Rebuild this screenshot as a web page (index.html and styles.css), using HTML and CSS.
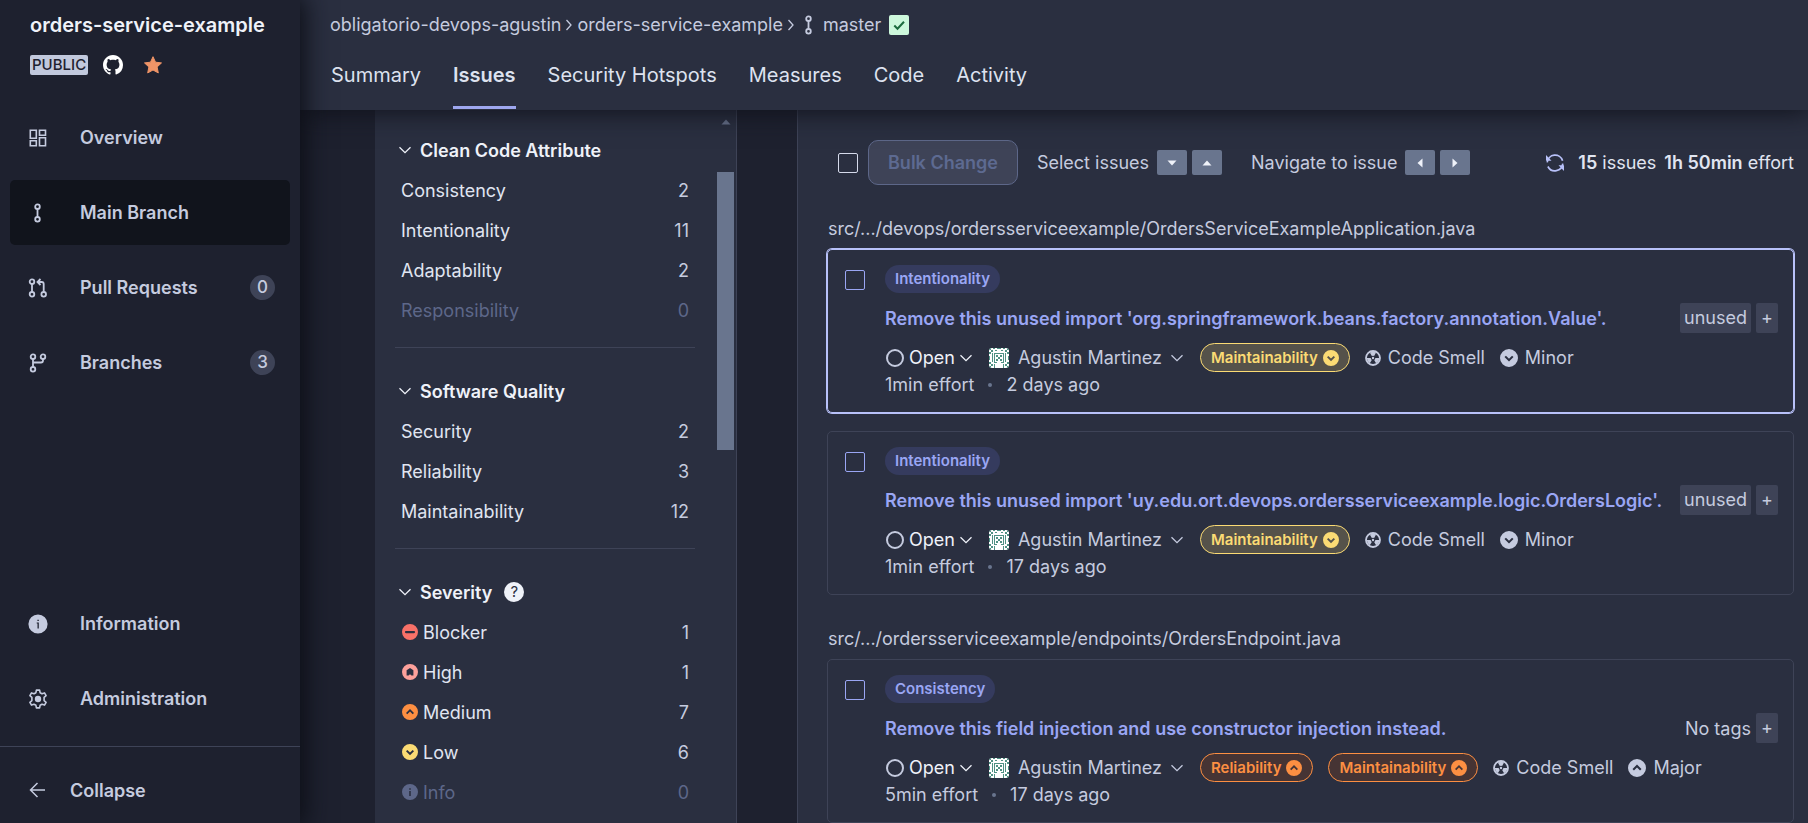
FILE: index.html
```html
<!DOCTYPE html>
<html lang="en">
<head>
<meta charset="utf-8">
<title>Issues - orders-service-example</title>
<meta name="viewport" content="width=device-width, initial-scale=1">
<link rel="stylesheet" href="styles.css">
</head>
<body>
<svg class="sprite" aria-hidden="true">
  <symbol id="i-chevron" viewBox="0 0 12 8"><path d="M.5 1.2 6 6.6l5.500-5.400" fill="none" stroke="currentColor" stroke-width="1.300"/></symbol>
  <symbol id="i-right" viewBox="0 0 8 14"><path d="M1.500 2l4.500 5-4.500 5" fill="none" stroke="currentColor" stroke-width="1.300"/></symbol>
  <symbol id="i-branch-main" viewBox="0 0 20 20"><g fill="none" stroke="currentColor" stroke-width="1.800"><circle cx="9.500" cy="3.700" r="2.300"/><circle cx="9.500" cy="16.300" r="2.300"/><path d="M9.500 6v8"/></g></symbol>
  <symbol id="i-down-circle" viewBox="0 0 16 16"><path fill="currentColor" fill-rule="evenodd" d="M8 0a8 8 0 1 1 0 16A8 8 0 0 1 8 0zM5.300 5.900 4 7.200l4 4 4-4-1.300-1.300L8 8.600z"/></symbol>
  <symbol id="i-up-circle" viewBox="0 0 16 16"><path fill="currentColor" fill-rule="evenodd" d="M8 0a8 8 0 1 1 0 16A8 8 0 0 1 8 0zM8 4.900l-4 4 1.300 1.300L8 7.500l2.700 2.700L12 8.900z"/></symbol>
  <symbol id="i-smell" viewBox="0 0 16 16"><circle cx="8" cy="8" r="7" fill="none" stroke="currentColor" stroke-width="1.800"/><g fill="currentColor"><circle cx="8" cy="8" r="1.200"/><path d="M6.800 6 4.800 2.600A6.200 6.200 0 0 0 1.800 8h3.900A2.300 2.300 0 0 1 6.800 6z" transform="rotate(60 8 8)"/><path d="M9.200 6l2-3.400a6.200 6.200 0 0 1 3 5.400h-3.900A2.300 2.300 0 0 0 9.200 6z" transform="rotate(60 8 8)"/><path d="M6.900 10 5 13.400a6.200 6.200 0 0 0 6 0L9.100 10a2.300 2.300 0 0 1-2.200 0z" transform="rotate(60 8 8)"/></g></symbol>
  <symbol id="i-avatar" viewBox="0 0 20 20"><rect width="20" height="20" fill="#fff"/><path fill="#4f9184" d="M0 0h2v2H0zM4 0h2v1H4zM8 0h4v1H8zM14 0h2v1h-2zM18 0h2v2h-2zM2 2h2v2H2zM6 2h2v1H6zM12 2h2v1h-2zM16 2h2v2h-2zM0 4h2v2H0zM18 4h2v2h-2zM0 8h1v4H0zM19 8h1v4h-1zM5 5h10v1H5zM5 6h1v8H5zM14 6h1v8h-1zM7 7h2v2H7zM11 7h2v2h-2zM9 9h2v2H9zM7 11h2v2H7zM11 11h2v2h-2zM3 5h1v9H3zM16 5h1v9h-1zM5 14h3v1H5zM12 14h3v1h-3zM0 14h2v2H0zM18 14h2v2h-2zM2 16h2v2H2zM16 16h2v2h-2zM5 16h1v4H5zM14 16h1v4h-1zM0 18h2v2H0zM18 18h2v2h-2z"/></symbol>
  <symbol id="i-tri" viewBox="0 0 10 6"><path fill="currentColor" d="M.5.5h9L5 5.500z"/></symbol>
</svg>

<div class="app">
  <aside class="sidebar">
    <div class="project">
      <h1 class="project-name">orders-service-example</h1>
      <div class="project-meta">
        <span class="visibility">PUBLIC</span>
        <svg class="github" width="20" height="20" viewBox="0 0 16 16" role="img" aria-label="GitHub"><path fill="currentColor" d="M8 0C3.580 0 0 3.580 0 8c0 3.540 2.290 6.530 5.470 7.590.4.070.55-.17.55-.38 0-.19-.01-.82-.01-1.490-2.010.37-2.530-.49-2.690-.94-.09-.23-.48-.94-.82-1.130-.28-.15-.68-.52-.01-.53.63-.01 1.080.58 1.230.82.72 1.210 1.870.87 2.330.66.070-.52.28-.87.51-1.070-1.780-.2-3.640-.89-3.640-3.950 0-.87.31-1.590.82-2.150-.08-.2-.36-1.020.08-2.120 0 0 .67-.21 2.200.82.64-.18 1.320-.27 2-.27.68 0 1.360.09 2 .27 1.530-1.040 2.200-.82 2.200-.82.44 1.100.16 1.920.08 2.120.51.56.82 1.270.82 2.150 0 3.070-1.870 3.750-3.650 3.950.29.25.54.73.54 1.480 0 1.070-.01 1.930-.01 2.200 0 .21.15.46.55.38A8.013 8.013 0 0 0 16 8c0-4.420-3.580-8-8-8z"/></svg>
        <button class="star" type="button" aria-label="Favorite"><svg width="20" height="20" viewBox="0 0 20 20"><path fill="currentColor" stroke="currentColor" stroke-linejoin="round" d="M10 1.700l2.500 5.500 6 .7-4.400 4.100 1.200 5.900L10 15l-5.300 2.900 1.200-5.900L1.500 7.900l6-.7z"/></svg></button>
      </div>
    </div>
    <nav class="nav" aria-label="Project">
      <a class="nav-item" href="#"><svg width="20" height="20" viewBox="0 0 20 20" fill="none" stroke="currentColor" stroke-width="1.600"><path d="M2.300 2.300h6v8h-6zM11.500 2.300h6v5h-6zM2.300 12.700h6v5h-6zM11.500 9.700h6v8h-6z"/></svg><span>Overview</span></a>
      <a class="nav-item active" href="#" aria-current="page"><svg width="20" height="20"><use href="#i-branch-main"/></svg><span>Main Branch</span></a>
      <a class="nav-item" href="#"><svg width="20" height="20" viewBox="0 0 20 20" fill="none" stroke="currentColor" stroke-width="1.800"><circle cx="4" cy="3.700" r="2.300"/><circle cx="4" cy="16.300" r="2.300"/><circle cx="15.700" cy="16.300" r="2.300"/><path d="M4 6v8M10 4h3.700a2 2 0 0 1 2 2v8M12.500 1 9.500 4l3 3"/></svg><span>Pull Requests</span><span class="count">0</span></a>
      <a class="nav-item" href="#"><svg width="20" height="20" viewBox="0 0 20 20" fill="none" stroke="currentColor" stroke-width="1.800"><circle cx="5" cy="3.700" r="2.300"/><circle cx="5" cy="16.300" r="2.300"/><circle cx="15" cy="3.700" r="2.300"/><path d="M5 6v8M15 6v1.500a2 2 0 0 1-2 2H5"/></svg><span>Branches</span><span class="count">3</span></a>
    </nav>
    <nav class="nav nav-bottom" aria-label="Project settings">
      <a class="nav-item" href="#"><svg width="20" height="20" viewBox="0 0 20 20"><path fill="currentColor" fill-rule="evenodd" d="M10 .4a9.600 9.600 0 1 1 0 19.200A9.600 9.600 0 0 1 10 .4zM9.400 5.700v1.400h1.400V5.700zM8.700 8.600v1h.8v4.800h1.300V8.600z"/></svg><span>Information</span></a>
      <a class="nav-item" href="#"><svg width="20" height="20" viewBox="0 0 20 20"><path fill="none" stroke="currentColor" stroke-width="1.600" stroke-linejoin="round" d="M8.400 1.100h3.200l.5 2.600 1.900 1.100 2.500-.9 1.600 2.800-2 1.700v3.200l2 1.700-1.600 2.800-2.500-.9-1.900 1.100-.5 2.600H8.400l-.5-2.600L6 15.200l-2.500.9-1.600-2.800 2-1.700V8.400l-2-1.700 1.600-2.800 2.500.9 1.900-1.100z"/><circle cx="10" cy="10" r="3.200" fill="currentColor"/></svg><span>Administration</span></a>
    </nav>
    <button class="collapse" type="button"><svg width="20" height="20" viewBox="0 0 20 20" fill="none" stroke="currentColor" stroke-width="1.500"><path d="M17 10H2.500M9.500 3l-7 7 7 7"/></svg><span>Collapse</span></button>
  </aside>

  <div class="page">
    <header class="header">
      <nav class="crumbs" aria-label="Breadcrumb">
        <a href="#">obligatorio-devops-agustin</a>
        <svg width="8" height="14"><use href="#i-right"/></svg>
        <a href="#">orders-service-example</a>
        <svg width="8" height="14"><use href="#i-right"/></svg>
        <a class="crumb-branch" href="#"><svg width="20" height="20"><use href="#i-branch-main"/></svg>master</a>
        <span class="gate" role="img" aria-label="Passed"><svg width="20" height="20" viewBox="0 0 20 20"><path d="M5.300 10.500l3.200 3.200L15 6.800" fill="none" stroke="currentColor" stroke-width="2"/></svg></span>
      </nav>
      <nav class="tabs" aria-label="Sections">
        <a class="tab" href="#">Summary</a>
        <a class="tab selected" href="#" aria-current="page">Issues</a>
        <a class="tab" href="#">Security Hotspots</a>
        <a class="tab" href="#">Measures</a>
        <a class="tab" href="#">Code</a>
        <a class="tab" href="#">Activity</a>
      </nav>
    </header>

    <div class="content">
      <section class="filters" aria-label="Filters">
        <div class="facets">
          <div class="facet">
            <button class="facet-title" type="button"><svg width="12" height="8"><use href="#i-chevron"/></svg>Clean Code Attribute</button>
            <button class="facet-row" type="button"><span>Consistency</span><span class="num">2</span></button>
            <button class="facet-row" type="button"><span>Intentionality</span><span class="num">11</span></button>
            <button class="facet-row" type="button"><span>Adaptability</span><span class="num">2</span></button>
            <button class="facet-row" type="button" disabled><span>Responsibility</span><span class="num">0</span></button>
          </div>
          <div class="facet">
            <button class="facet-title" type="button"><svg width="12" height="8"><use href="#i-chevron"/></svg>Software Quality</button>
            <button class="facet-row" type="button"><span>Security</span><span class="num">2</span></button>
            <button class="facet-row" type="button"><span>Reliability</span><span class="num">3</span></button>
            <button class="facet-row" type="button"><span>Maintainability</span><span class="num">12</span></button>
          </div>
          <div class="facet">
            <button class="facet-title" type="button"><svg width="12" height="8"><use href="#i-chevron"/></svg>Severity<span class="help">?</span></button>
            <button class="facet-row" type="button"><svg class="sev blocker" width="16" height="16" viewBox="0 0 16 16"><path fill="currentColor" fill-rule="evenodd" d="M8 0a8 8 0 1 1 0 16A8 8 0 0 1 8 0zM4 7a1 1 0 0 0 0 2.200h8A1 1 0 0 0 12 7z"/></svg><span>Blocker</span><span class="num">1</span></button>
            <button class="facet-row" type="button"><svg class="sev high" width="16" height="16" viewBox="0 0 16 16"><path fill="currentColor" fill-rule="evenodd" d="M8 0a8 8 0 1 1 0 16A8 8 0 0 1 8 0zM8 4 4.600 6.300v5.300h1.900L8 10.300l1.500 1.300h1.900V6.300z"/></svg><span>High</span><span class="num">1</span></button>
            <button class="facet-row" type="button"><svg class="sev medium" width="16" height="16"><use href="#i-up-circle"/></svg><span>Medium</span><span class="num">7</span></button>
            <button class="facet-row" type="button"><svg class="sev low" width="16" height="16"><use href="#i-down-circle"/></svg><span>Low</span><span class="num">6</span></button>
            <button class="facet-row" type="button" disabled><svg class="sev" width="16" height="16" viewBox="0 0 16 16"><path fill="currentColor" fill-rule="evenodd" d="M8 0a8 8 0 1 1 0 16A8 8 0 0 1 8 0zM7.200 4.200v1.600h1.600V4.200zM7.200 7v5h1.600V7z"/></svg><span>Info</span><span class="num">0</span></button>
          </div>
        </div>
        <div class="scroll" aria-hidden="true">
          <svg class="scroll-up flip" width="10" height="6"><use href="#i-tri"/></svg>
          <div class="scroll-thumb"></div>
        </div>
      </section>

      <main class="issues">
        <div class="toolbar">
          <input class="check" type="checkbox" aria-label="Select all issues">
          <button class="bulk" type="button" disabled>Bulk Change</button>
          <div class="keys"><span>Select issues</span><kbd><svg width="10" height="6"><use href="#i-tri"/></svg></kbd><kbd><svg class="flip" width="10" height="6"><use href="#i-tri"/></svg></kbd></div>
          <div class="keys"><span>Navigate to issue</span><kbd><svg class="turn-left" width="10" height="6"><use href="#i-tri"/></svg></kbd><kbd><svg class="turn-right" width="10" height="6"><use href="#i-tri"/></svg></kbd></div>
          <div class="totals">
            <button class="reload" type="button" aria-label="Reload"><svg width="20" height="20" viewBox="0 0 20 20"><path fill="none" stroke="currentColor" stroke-width="1.700" d="M2.200 9.300A7.900 7.900 0 0 1 17.600 7.700M17.800 10.700A7.900 7.900 0 0 1 2.900 13.500"/><path fill="currentColor" d="M1 2v5.700h5.500zM19 18v-5.700h-5.500z"/></svg></button>
            <span><b>15</b> issues</span>
            <span><b>1h 50min</b> effort</span>
          </div>
        </div>

        <section class="group">
          <h2 class="file">src/.../devops/ordersserviceexample/OrdersServiceExampleApplication.java</h2>
          <article class="card current">
            <input class="check" type="checkbox" aria-label="Select issue">
            <div class="card-body">
              <span class="attr">Intentionality</span>
              <div class="line">
                <a class="title" href="#">Remove this unused import 'org.springframework.beans.factory.annotation.Value'.</a>
                <div class="tags"><span class="tag">unused</span><button class="plus" type="button" aria-label="Add tag">+</button></div>
              </div>
              <div class="details">
                <button class="status" type="button"><span class="ring"></span>Open<svg width="12" height="8"><use href="#i-chevron"/></svg></button>
                <button class="assignee" type="button"><svg class="avatar" width="20" height="20"><use href="#i-avatar"/></svg>Agustin Martinez<svg width="12" height="8"><use href="#i-chevron"/></svg></button>
                <span class="pill low">Maintainability<svg width="16" height="16"><use href="#i-down-circle"/></svg></span>
                <span class="type"><svg width="16" height="16"><use href="#i-smell"/></svg>Code Smell</span>
                <span class="severity"><svg width="18" height="18"><use href="#i-down-circle"/></svg>Minor</span>
              </div>
              <div class="effort"><span>1min effort</span><i class="dot"></i><span>2 days ago</span></div>
            </div>
          </article>
          <article class="card">
            <input class="check" type="checkbox" aria-label="Select issue">
            <div class="card-body">
              <span class="attr">Intentionality</span>
              <div class="line">
                <a class="title" href="#">Remove this unused import 'uy.edu.ort.devops.ordersserviceexample.logic.OrdersLogic'.</a>
                <div class="tags"><span class="tag">unused</span><button class="plus" type="button" aria-label="Add tag">+</button></div>
              </div>
              <div class="details">
                <button class="status" type="button"><span class="ring"></span>Open<svg width="12" height="8"><use href="#i-chevron"/></svg></button>
                <button class="assignee" type="button"><svg class="avatar" width="20" height="20"><use href="#i-avatar"/></svg>Agustin Martinez<svg width="12" height="8"><use href="#i-chevron"/></svg></button>
                <span class="pill low">Maintainability<svg width="16" height="16"><use href="#i-down-circle"/></svg></span>
                <span class="type"><svg width="16" height="16"><use href="#i-smell"/></svg>Code Smell</span>
                <span class="severity"><svg width="18" height="18"><use href="#i-down-circle"/></svg>Minor</span>
              </div>
              <div class="effort"><span>1min effort</span><i class="dot"></i><span>17 days ago</span></div>
            </div>
          </article>
        </section>

        <section class="group">
          <h2 class="file">src/.../ordersserviceexample/endpoints/OrdersEndpoint.java</h2>
          <article class="card">
            <input class="check" type="checkbox" aria-label="Select issue">
            <div class="card-body">
              <span class="attr">Consistency</span>
              <div class="line">
                <a class="title" href="#">Remove this field injection and use constructor injection instead.</a>
                <div class="tags"><span>No tags</span><button class="plus" type="button" aria-label="Add tag">+</button></div>
              </div>
              <div class="details">
                <button class="status" type="button"><span class="ring"></span>Open<svg width="12" height="8"><use href="#i-chevron"/></svg></button>
                <button class="assignee" type="button"><svg class="avatar" width="20" height="20"><use href="#i-avatar"/></svg>Agustin Martinez<svg width="12" height="8"><use href="#i-chevron"/></svg></button>
                <span class="pill medium">Reliability<svg width="16" height="16"><use href="#i-up-circle"/></svg></span>
                <span class="pill medium">Maintainability<svg width="16" height="16"><use href="#i-up-circle"/></svg></span>
                <span class="type"><svg width="16" height="16"><use href="#i-smell"/></svg>Code Smell</span>
                <span class="severity"><svg width="18" height="18"><use href="#i-up-circle"/></svg>Major</span>
              </div>
              <div class="effort"><span>5min effort</span><i class="dot"></i><span>17 days ago</span></div>
            </div>
          </article>
        </section>
      </main>
    </div>
  </div>
</div>
</body>
</html>
```
FILE: styles.css
```css
:root {
  --bg: #1e212f;
  --surface: #2a2f40;
  --border: #3e4357;
  --text: #c5cbdf;
  --text-strong: #eff2f9;
  --muted: #5d6789;
  --link: #9aa6f4;
}
* { box-sizing: border-box; }
body {
  margin: 0;
  background: var(--bg);
  color: var(--text);
  font: 400 18px/25px Inter, "Liberation Sans", sans-serif;
}
button {
  margin: 0;
  padding: 0;
  border: 0;
  background: none;
  color: inherit;
  font: inherit;
  text-align: left;
}
a { color: inherit; text-decoration: none; }
h1, h2 { margin: 0; }
svg { flex: none; }
.sprite { display: none; }

.app { display: flex; height: 100vh; overflow: hidden; }

/* Sidebar */
.sidebar {
  position: relative;
  z-index: 3;
  display: flex;
  flex: none;
  flex-direction: column;
  width: 300px;
  background: var(--bg);
  box-shadow: 0 0 25px 4px #0b0d14;
}
.project { padding: 13px 30px 30px; }
.project-name {
  color: var(--text-strong);
  font-size: 20px;
  font-weight: 600;
  line-height: 25px;
  white-space: nowrap;
}
.project-meta { display: flex; align-items: center; margin-top: 17px; height: 20px; }
.visibility {
  padding: 0 2px;
  border-radius: 2px;
  background: #c2c9dd;
  color: #1e212f;
  font-size: 15px;
  font-weight: 500;
  line-height: 20px;
}
.github { margin: 0 20px 0 15px; color: #fff; }
.star { height: 20px; color: #ef9467; }
.nav { display: flex; flex-direction: column; gap: 10px; padding: 0 10px; }
.nav-item {
  display: flex;
  align-items: center;
  height: 65px;
  padding: 0 15px 0 18px;
  border-radius: 5px;
  font-weight: 600;
}
.nav-item svg { margin-right: 32px; }
.nav-item.active { background: #11141c; }
.count {
  width: 25px;
  margin-left: auto;
  border-radius: 50%;
  background: #3e4357;
  font-weight: 500;
  font-size: 17px;
  line-height: 25px;
  text-align: center;
}
.nav-bottom { margin-top: auto; padding-bottom: 15px; }
.collapse {
  display: flex;
  align-items: center;
  gap: 22px;
  height: 77px;
  padding: 10px 28px 0;
  border-top: 1px solid var(--border);
  font-weight: 600;
}

/* Header */
.page { display: flex; flex: 1; flex-direction: column; min-width: 0; }
.header {
  position: relative;
  z-index: 2;
  height: 110px;
  flex: none;
  padding: 12px 30px 0;
  background: var(--surface);
  box-shadow: 0 0 25px 2px #10121b;
}
.crumbs { display: flex; align-items: center; gap: 4px; height: 25px; }
.crumb-branch { display: flex; gap: 4px; align-items: center; }
.gate { width: 20px; height: 20px; margin-left: 4px; border-radius: 2px; background: #cdf8dc; color: #1c6b3d; }
.gate svg { display: block; }
.tabs { display: flex; gap: 32px; padding-left: 1px; margin-top: 22px; }
.tab { height: 50px; color: #dde2ef; font-size: 20px; line-height: 32px; }
.tab.selected { border-bottom: 3px solid #9ea7ef; font-weight: 600; }

/* Filters */
.content { display: flex; flex: 1; gap: 60px; min-height: 0; padding-left: 75px; }
.filters {
  display: flex;
  flex: none;
  justify-content: space-between;
  width: 362px;
  padding: 0 2px 0 20px;
  border-right: 1px solid var(--border);
  background: var(--surface);
  overflow: hidden;
}
.facets { width: 300px; padding-top: 20px; }
.facet { padding-bottom: 17px; }
.facet + .facet { padding-top: 23px; border-top: 1px solid var(--border); }
.facet-title {
  display: flex;
  align-items: center;
  height: 40px;
  padding-left: 4px;
  color: var(--text-strong);
  font-weight: 600;
}
.facet-title svg { margin-right: 9px; }
.help {
  width: 20px;
  height: 20px;
  margin-left: 12px;
  border-radius: 50%;
  background: #eff2f9;
  color: #2a2f40;
  font-size: 15px;
  font-weight: 400;
  line-height: 20px;
  text-align: center;
}
.facet-row {
  display: flex;
  align-items: center;
  width: 100%;
  height: 40px;
  padding: 0 6px;
  color: #e0e5f1;
}
.facet-row:disabled { color: var(--muted); }
.facet-row .num { margin-left: auto; color: var(--text); }
.facet-row:disabled .num { color: inherit; }
.sev { margin: 0 5px 0 1px; }
.sev.blocker { color: #f87168; }
.sev.high { color: #fda19b; }
.sev.medium { color: #fd8f42; }
.sev.low { color: #fbdb74; }
.scroll { display: flex; flex-direction: column; align-items: center; width: 17px; padding-top: 9px; color: #69738d; }
.scroll-thumb { width: 17px; height: 278px; margin-top: 47px; background: #69758e; }
.flip { transform: rotate(180deg); }
.turn-left { transform: rotate(90deg); }
.turn-right { transform: rotate(-90deg); }

/* Issue list */
.issues {
  flex: 1;
  min-width: 0;
  padding: 30px 14px 0 29px;
  border-left: 1px solid var(--border);
  background: var(--surface);
}
.toolbar { display: flex; align-items: center; height: 45px; padding-left: 11px; white-space: nowrap; }
.check {
  appearance: none;
  flex: none;
  width: 20px;
  height: 20px;
  margin: 0;
  border: 1px solid #d5daeb;
  border-radius: 2px;
}
.bulk {
  height: 45px;
  margin-left: 10px;
  padding: 0 19px;
  border: 1px solid #5d6789;
  border-radius: 10px;
  background: #3e4357;
  color: #5d6a91;
  font-weight: 600;
}
.keys { display: flex; align-items: center; margin-left: 19px; }
.keys + .keys { margin-left: 29px; }
.keys span { margin-right: 3px; }
kbd {
  display: flex;
  align-items: center;
  justify-content: center;
  width: 30px;
  height: 25px;
  margin-left: 5px;
  border-radius: 2px;
  background: #69758e;
  color: #eff2f9;
}
.totals { display: flex; align-items: center; gap: 8px; margin-left: auto; color: #e0e5f1; }
.totals b { font-weight: 600; }
.reload { height: 20px; margin-right: 5px; color: #b8c1f9; }
.reload svg { display: block; }

.group { display: flex; flex-direction: column; gap: 18px; margin-top: 31px; }
.file { margin: 0 1px -10px; font-size: 18px; font-weight: 400; line-height: 25px; }
.card {
  display: flex;
  gap: 20px;
  padding: 15px;
  padding-left: 17px;
  border: 1px solid var(--border);
  border-radius: 5px;
}
.card.current { border-color: #b8c1f9; box-shadow: 0 0 0 1px #b8c1f9; }
.card .check { margin-top: 5px; border-color: var(--link); }
.card-body { display: flex; flex: 1; flex-direction: column; align-items: flex-start; min-width: 0; }
.attr {
  padding: 0 10px;
  border-radius: 14px;
  background: #353b5e;
  color: var(--link);
  font-size: 15px;
  font-weight: 600;
  line-height: 28px;
}
.line { display: flex; align-items: center; justify-content: space-between; width: 100%; margin: 10px 0; }
.title { color: var(--link); font-weight: 600; white-space: nowrap; }
.tags { display: flex; align-items: center; gap: 5px; white-space: nowrap; }
.tag, .plus { height: 30px; border-radius: 2px; background: #3e4357; line-height: 30px; }
.tag { padding: 0 4px; }
.plus { width: 22px; text-align: center; }
.details { display: flex; align-items: center; height: 29px; white-space: nowrap; }
.status { display: flex; align-items: center; gap: 5px; padding-left: 1px; color: #eff2f9; }
.ring { width: 18px; height: 18px; border: 2px solid var(--text); border-radius: 50%; }
.assignee { display: flex; align-items: center; gap: 9px; margin-left: 17px; }
.avatar { border-radius: 3px; }
.pill {
  display: flex;
  align-items: center;
  gap: 5px;
  height: 29px;
  margin-left: 17px;
  padding: 0 10px;
  border: 1px solid;
  border-radius: 15px;
  font-size: 15px;
  font-weight: 600;
}
.pill + .pill { margin-left: 15px; }
.pill.low { background: #55524a; color: #fbdb74; }
.pill.medium { background: #463434; color: #fd8f42; }
.type, .severity { display: flex; align-items: center; gap: 7px; margin-left: 15px; }
.effort { display: flex; align-items: center; }
.dot { width: 4px; height: 4px; margin: 0 14px; border-radius: 50%; background: #69758e; }
```
